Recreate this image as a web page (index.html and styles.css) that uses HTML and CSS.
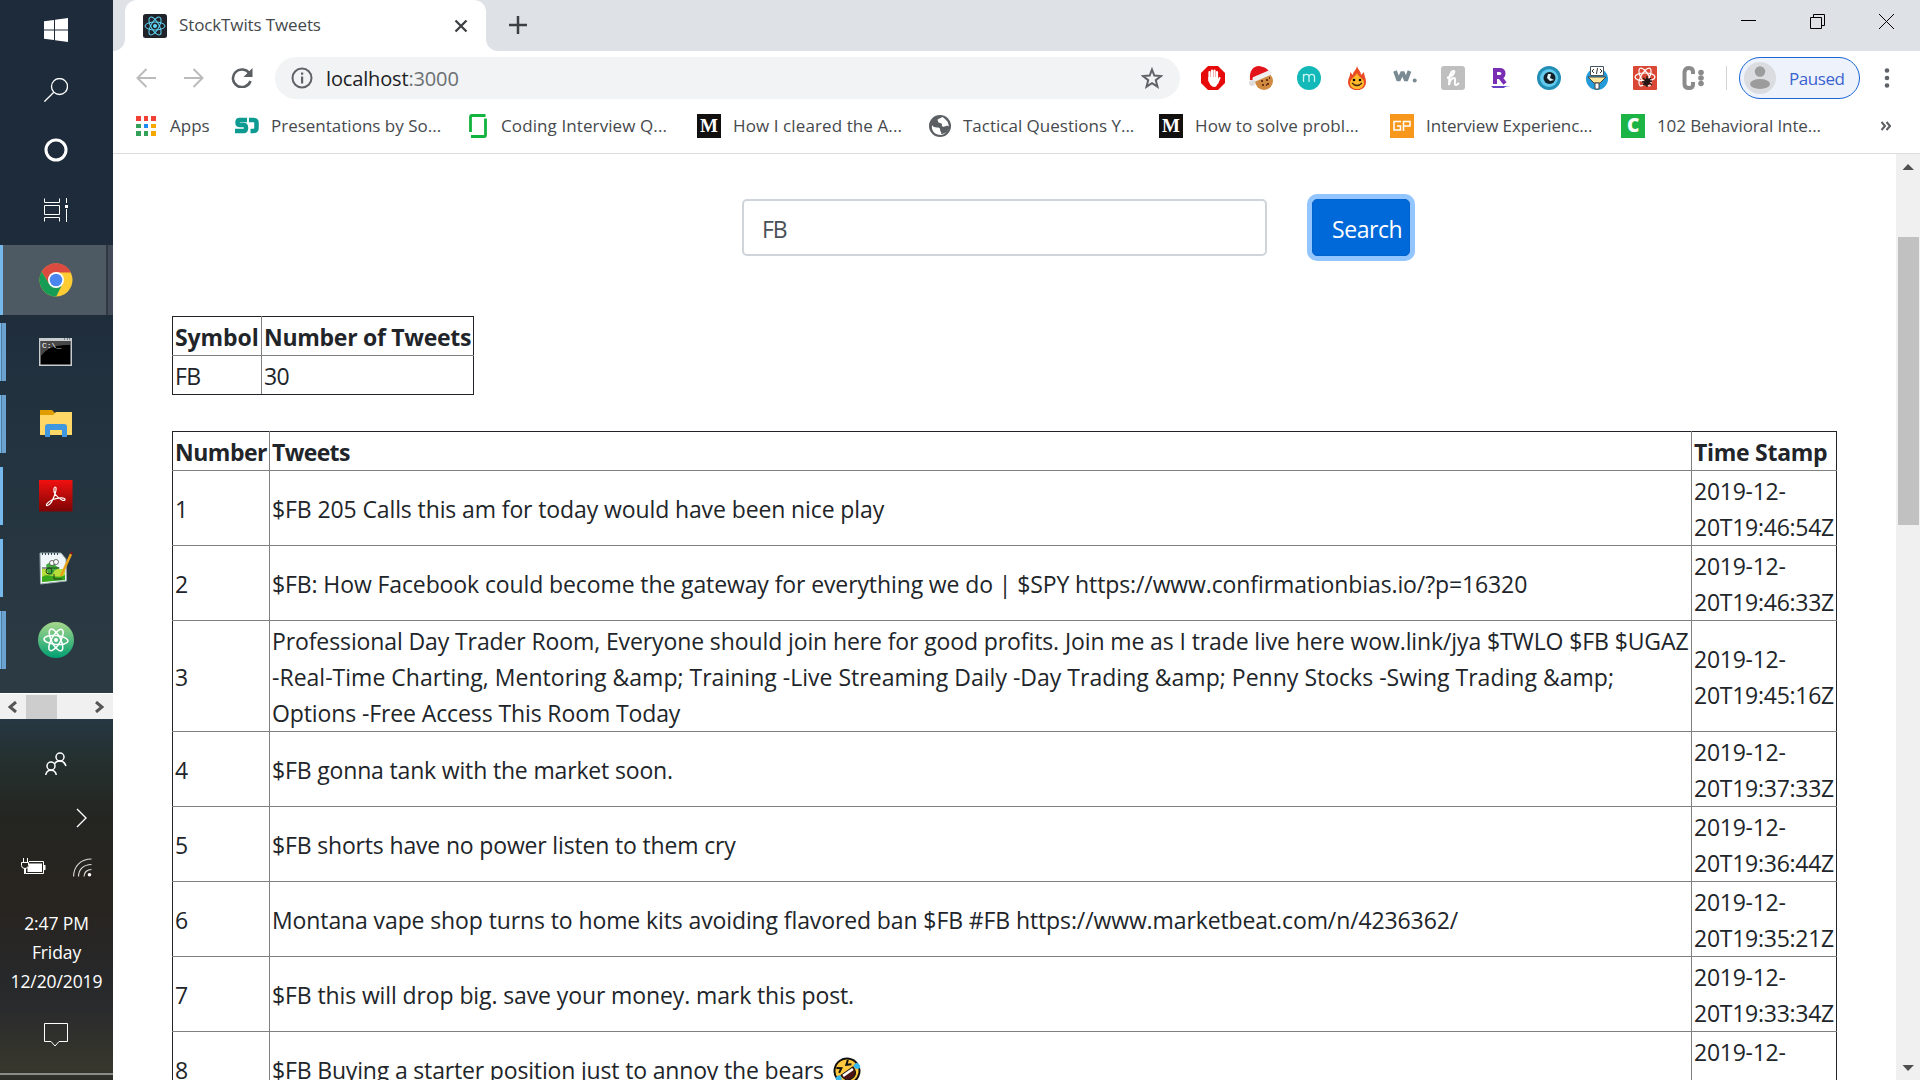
FILE: index.html
```html
<!DOCTYPE html>
<html lang="en">
<head>
<meta charset="utf-8">
<title>StockTwits Tweets</title>
<link rel="stylesheet" href="styles.css">
</head>
<body>
<div class="desktop">
  <aside class="taskbar">
    <div class="task-upper">
      <div class="sys"><svg width="24" height="24" viewBox="0 0 24 24"><path fill="#fff" d="M0 3.300 10 2v9.500H0zM11 1.800 24 0v11.500H11zM0 12.500h10V22L0 20.700zM11 12.500h13V24l-13-1.800z"/></svg></div>
      <div class="sys"><svg width="24" height="24" viewBox="0 0 24 24"><g fill="none" stroke="#fff" stroke-width="1.300"><circle cx="15.500" cy="8.500" r="8"/><path d="M9.800 14.200.4 23.600"/></g></svg></div>
      <div class="sys"><svg width="24" height="24" viewBox="0 0 24 24"><circle cx="12" cy="12" r="10" fill="none" stroke="#fff" stroke-width="3"/></svg></div>
      <div class="sys"><svg width="24" height="24" viewBox="0 0 24 24"><g fill="none" stroke="#fff"><path d="M.5.500v4h15v-4M.5 7.500h15v9H.5zM.5 23.500v-4h15v4M22.500 0v5M22.500 11v13"/></g><path fill="#fff" d="M21 7h3v3h-3z"/></svg></div>
      <div class="app app-current"><svg width="34" height="34" viewBox="0 0 34 34"><circle cx="17" cy="17" r="16.500" fill="#fc3"/><path fill="#db4b3f" d="M2.700 8.700A16.500 16.500 0 0 1 32 9.500H17L9.800 20.500z"/><path fill="#179c55" d="M2.700 8.700A16.500 16.500 0 0 0 17.200 33.500L24 20 17 24.500 10 20.500z"/><circle cx="17" cy="17" r="8" fill="#fff"/><circle cx="17" cy="17" r="6.300" fill="#4a86f0"/></svg></div>
      <div class="app app-multi"><svg width="34" height="28" viewBox="0 0 34 28"><path fill="#c9ccce" d="M0 0h33v28H0z"/><path d="M1.500 3h30v23.500h-30z"/><path fill="#777" d="M2 3h29v4Q10 6 2 18z" opacity=".6"/><path d="M25 1h1m2 0h1m1 0h1" stroke="#345"/><text class="cmd-text" x="3" y="10">C:\_</text></svg></div>
      <div class="app app-multi"><svg width="34" height="28" viewBox="0 0 34 28"><path fill="#e09d00" d="M1 0h12l3 3h17v6H1z"/><path fill="#ffd766" d="M1 5h13l3-3h16v23H1z"/><path fill="#3f97df" d="M6 27V17q0-3 3-3h16q3 0 3 3v10h-5v-7H11v7z"/></svg></div>
      <div class="app"><svg width="34" height="32" viewBox="0 0 34 32"><defs><linearGradient id="pdf" x2="0" y2="1"><stop stop-color="#f11010"/><stop offset="1" stop-color="#7d0404"/></linearGradient></defs><path fill="url(#pdf)" d="M0 0h33.500v31.500H0z"/><path fill="none" stroke="#fff" stroke-width="1.200" d="M16 14c-2-4-1-7 .2-7s1.300 3-.2 7c-2 6-5 11-7.500 11.500S8 22 14 19.500s12-2 12 0-5 1-10-5.500"/></svg></div>
      <div class="app"><svg width="34" height="34" viewBox="0 0 34 34"><path fill="#eef6fa" stroke="#9aa" d="M1 2h21l5 6 .5 22L1.500 33z"/><path d="M3 3h18" stroke="#345" stroke-width="2" stroke-dasharray="1 2"/><path fill="#b6dd38" d="M3 18h23v10L3 31z"/><path fill="#39a81d" d="M3 26c7-5 14 3 23-2v5L3 31z"/><path fill="#42ad3d" d="M7 14c4-4 9-2 10 1l4 2-5 2-3 5-4-1z"/><circle cx="13" cy="12" r="2.500" fill="#fff" stroke="#333" stroke-width=".7"/><circle cx="17" cy="11" r="2.500" fill="#fff" stroke="#333" stroke-width=".7"/><circle cx="10" cy="20" r="3" fill="none" stroke="#253c20"/><path d="M3 17h17M15 23v5h8" fill="none" stroke="#253c20"/><path d="m22 25 10-22" stroke="#e8a317" stroke-width="2.500"/><path d="m32 3 1-2" stroke="#812" stroke-width="2"/></svg></div>
      <div class="app app-multi"><svg width="36" height="36" viewBox="0 0 36 36"><defs><linearGradient id="atom" x2="0" y2="1"><stop stop-color="#a8d78c"/><stop offset="1" stop-color="#00a072"/></linearGradient></defs><circle cx="18" cy="18" r="18" fill="url(#atom)"/><g fill="none" stroke="#fff" stroke-width="1.500"><ellipse cx="18" cy="18" rx="12" ry="4.500" transform="rotate(5 18 18)"/><ellipse cx="18" cy="18" rx="12" ry="4.500" transform="rotate(63 18 18)"/><ellipse cx="18" cy="18" rx="12" ry="4.500" transform="rotate(120 18 18)"/></g><circle cx="18" cy="18" r="2" fill="#fff"/></svg></div>
    </div>
    <div class="hscroll"><svg width="9" height="12" viewBox="0 0 9 12"><path fill="none" stroke="#555" stroke-width="3" d="m8 1-6 5 6 5"/></svg><span class="hthumb"></span><svg width="9" height="12" viewBox="0 0 9 12"><path fill="none" stroke="#555" stroke-width="3" d="m1 1 6 5-6 5"/></svg></div>
    <div class="tray">
      <div class="tray-row people"><svg width="22" height="24" viewBox="0 0 22 24"><g fill="none" stroke="#fff" stroke-width="1.500"><circle cx="15" cy="5" r="4"/><circle cx="6" cy="14" r="4"/><path d="M9.500 12c2-3.500 9-5 11.500 2M.7 23c1-6.500 9.600-6.500 10.600 0"/></g></svg></div>
      <div class="tray-row more"><svg width="11" height="20" viewBox="0 0 11 20"><path fill="none" stroke="#fff" stroke-width="1.400" d="m1 1 9 9-9 9"/></svg></div>
      <div class="tray-row status"><svg width="25" height="18" viewBox="0 0 25 18"><path fill="none" stroke="#fff" d="M8 3.500h14.500v12H4.500V10M2.500 0v4M6.500 0v4M.5 4.500h7v3q0 3-3.500 3T.5 7.500zM3.500 10v6"/><path fill="#fff" d="M8 5.500h13v8.500H6.500v-4L8 8zM23 7h1.500v5H23z"/></svg><svg width="19" height="19" viewBox="0 0 19 19"><g fill="none" stroke="#fff" stroke-width="1.100"><path d="M.6 18.500C.6 8 8 1 18.500 1M5.500 18.500c0-7 5-12 13-12M11 18.500c0-4 3-7 7.500-7" opacity=".85"/></g><circle cx="16.500" cy="16.700" r="1.800" fill="#fff"/></svg></div>
      <div class="clock"><span>2:47 PM</span><span>Friday</span><span>12/20/2019</span></div>
      <div class="tray-row notes"><svg width="24" height="25" viewBox="0 0 24 25"><path fill="none" stroke="#fff" d="M.5.500h23v18H15l-4 4.500-4-4.500H.5z"/></svg></div>
      <div class="show-desktop"></div>
    </div>
  </aside>

  <main class="browser">
    <header class="tabs">
      <span class="strip-end"></span>
      <div class="tab">
        <svg width="24" height="24" viewBox="0 0 24 24"><rect width="24" height="24" rx="2.500" fill="#20232a"/><g fill="none" stroke="#61dafb"><ellipse cx="12" cy="12" rx="10" ry="4"/><ellipse cx="12" cy="12" rx="10" ry="4" transform="rotate(60 12 12)"/><ellipse cx="12" cy="12" rx="10" ry="4" transform="rotate(120 12 12)"/></g><circle cx="12" cy="12" r="2" fill="#61dafb"/></svg>
        <span class="tab-title">StockTwits Tweets</span>
        <svg width="14" height="14" viewBox="0 0 14 14"><path stroke="#3c4043" stroke-width="2.300" d="m1.500 1.500 11 11m0-11-11 11"/></svg>
      </div>
      <div class="tab-rest">
        <svg width="18" height="18" viewBox="0 0 18 18"><path stroke="#3c4043" stroke-width="2.500" d="M0 9h18M9 0v18"/></svg>
        <div class="window-controls">
          <svg width="15" height="15" viewBox="0 0 15 15"><path stroke="#000" d="M0 6.500h15"/></svg>
          <svg width="15" height="15" viewBox="0 0 15 15"><path fill="none" stroke="#000" d="M.5 3.500h11v11H.5zM3.500 3V.5h11v11H12"/></svg>
          <svg width="15" height="15" viewBox="0 0 15 15"><path stroke="#000" d="m0 0 15 15M15 0 0 15"/></svg>
        </div>
      </div>
    </header>

    <div class="toolbar">
      <svg class="nav" width="20" height="20" viewBox="0 0 20 20"><path fill="none" stroke="#bbb" stroke-width="2" d="M20 10H1.500M10.500 1l-9 9 9 9"/></svg>
      <svg class="nav" width="20" height="20" viewBox="0 0 20 20"><path fill="none" stroke="#bbb" stroke-width="2" d="M0 10h18.500M9.500 1l9 9-9 9"/></svg>
      <svg class="reload" width="22" height="20" viewBox="0 0 22 20"><path fill="none" stroke="#5a5d61" stroke-width="2.500" d="M18.500 5.500A9 8.800 0 1 0 19.500 13"/><path fill="#5a5d61" d="M21.500 0v9h-9z"/></svg>
      <div class="omnibox">
        <svg width="22" height="22" viewBox="0 0 22 22"><circle cx="11" cy="11" r="9.500" fill="none" stroke="#5f6368" stroke-width="2"/><path fill="#5f6368" d="M10 5.500h2.200v2.200H10zM10 9.500h2.200v7H10z"/></svg>
        <span class="url">localhost<span class="port">:3000</span></span>
        <svg width="22" height="22" viewBox="0 0 22 22"><path fill="none" stroke="#5f6368" stroke-width="2" d="m11 2.500 2.300 6 6.700.5-5.200 4.200 1.700 6.500-5.500-3.600-5.500 3.600 1.700-6.500L2 9l6.700-.5z"/></svg>
      </div>
      <div class="extensions">
        <svg width="24" height="24" viewBox="0 0 24 24"><path fill="#e60a0a" d="M7 0h10l7 7v10l-7 7H7l-7-7V7z"/><path fill="none" stroke="#fff" stroke-width="2.200" stroke-linecap="round" d="M8.500 6v9M11 4.500V14M13.500 4.500V14M16 6v10"/><path fill="#fff" d="M7.400 11h9.700v5q-1 5-4 5-4 0-5.700-7z"/><path d="m18.500 12-2 5" stroke="#fff" stroke-width="2" stroke-linecap="round"/></svg>
        <svg width="24" height="24" viewBox="0 0 24 24"><circle cx="15" cy="15" r="9" fill="#cf8940"/><path d="M12 15h2m3-1h2m-6 5h2m3-1h2m0-6h1m-4 7h1" stroke="#6b3514" stroke-width="2"/><path fill="#e3131b" d="M1 14C0 5 4 0 10 0c6 1 9 3 10 6L5 14z"/><path d="m6 13 14-6" stroke="#eee" stroke-width="5" stroke-linecap="round"/><circle cx="3" cy="17" r="3" fill="#ddd"/></svg>
        <svg width="24" height="24" viewBox="0 0 24 24"><circle cx="12" cy="12" r="12" fill="#13b9b8"/><path fill="none" stroke="#c8f3ef" stroke-width="1.300" d="M6.500 16V8m0 3c0-3.500 5.500-3.500 5.500 0v5m0-5c0-3.500 5.500-3.500 5.500 0v5"/></svg>
        <svg width="24" height="24" viewBox="0 0 24 24"><path fill="#e94b24" d="M12 0c-1 5-4 5-4 9L5 6c1 4-2 6-2 10 0 11 18 11 18 0 0-4-2-6-2-10l-3 3c0-4-3-5-4-9z"/><path fill="#ffb92a" d="M12 7c2 5 7 5 7 10 0 8-14 8-14 0 0-4 5-6 7-10z"/><circle cx="9" cy="14" r="1.300"/><circle cx="15" cy="14" r="1.300"/><path fill="none" stroke="#421" stroke-width="1.300" d="M7 17q5 5 10 0"/></svg>
        <svg width="24" height="24" viewBox="0 0 24 24"><path fill="none" stroke="#798a93" stroke-width="3.800" stroke-linejoin="bevel" d="M2 5l3.500 9.500L9.500 6l3.500 8.500L16.500 5"/><circle cx="21.700" cy="14.500" r="2" fill="#798a93"/></svg>
        <svg width="24" height="24" viewBox="0 0 24 24"><rect width="24" height="24" rx="3" fill="#bfbfbf"/><path fill="none" stroke="#fff" stroke-width="2" d="M6 12C13 10 15 4 12 5S8 13 8 19c1-5 3-7 5-7 3 0-1 7 2 7 1 0 2-1 3-2"/></svg>
        <svg width="24" height="24" viewBox="0 0 24 24"><path fill="none" stroke="#7a2eb4" stroke-width="4" d="M6 18V4h4.500q4 0 4 3.500T10 11H6m5 0 5 6.500"/><path fill="#6540c2" d="M2 20h20q-6 0-7 2H4z"/></svg>
        <svg width="24" height="24" viewBox="0 0 24 24"><circle cx="12" cy="12" r="12" fill="#238eb5"/><circle cx="12" cy="12" r="9" fill="#62cbed"/><circle cx="12.500" cy="12" r="6" fill="#142028"/><path fill="#e2f4fa" d="M11 8h3l-1 4 4 2-4 1-3-3z"/></svg>
        <svg width="24" height="24" viewBox="0 0 24 24"><circle cx="12" cy="13" r="11" fill="#229bd8"/><path fill="#fff" stroke="#45535c" d="M5.500.500h13v9h-13z"/><path fill="none" stroke="#333" d="m9 3-2 2 2 2m6-4 2 2-2 2m-3.500 1 1-6"/><path fill="#ffe69b" stroke="#444" d="M3 11h18l-6 6H9z"/><path fill="#fff" stroke="#444" d="M10 17h4v6h-4z"/></svg>
        <svg width="24" height="24" viewBox="0 0 24 24"><rect width="24" height="24" rx="1" fill="#da4835"/><g fill="none" stroke="#fff" stroke-width="1.200"><ellipse cx="12" cy="11" rx="10" ry="4"/><ellipse cx="12" cy="11" rx="10" ry="4" transform="rotate(60 12 11)"/><ellipse cx="12" cy="11" rx="10" ry="4" transform="rotate(120 12 11)"/></g><path stroke="#251614" stroke-width="1.300" d="m10 12 9 7m-9 0 8-7m-9 4 10-1m-5-5v11"/><ellipse cx="14" cy="16" rx="3" ry="4" fill="#251614" transform="rotate(30 14 16)"/></svg>
        <svg width="24" height="24" viewBox="0 0 24 24"><path fill="none" stroke="#8b8b8b" stroke-width="4" d="M12 8V6q0-4-4-4T3.500 6v12q0 4 4.500 4t4-4v-2"/><g fill="#8b8b8b"><circle cx="20" cy="6.500" r="2.800"/><circle cx="20" cy="12" r="2.800"/><circle cx="20" cy="17.500" r="2.800"/></g></svg>
      </div>
      <span class="separator"></span>
      <div class="profile"><svg width="32" height="32" viewBox="0 0 32 32"><circle cx="16" cy="16" r="16" fill="#dadce0"/><circle cx="16" cy="9.500" r="5.200" fill="#9c9c9c"/><ellipse cx="16" cy="22" rx="10" ry="5" fill="#9c9c9c"/></svg><span>Paused</span></div>
      <svg width="6" height="20" viewBox="0 0 6 20"><g fill="#5f6368"><circle cx="3" cy="2.500" r="2.300"/><circle cx="3" cy="10" r="2.300"/><circle cx="3" cy="17.500" r="2.300"/></g></svg>
    </div>

    <nav class="bookmarks">
      <a class="bm bm-apps"><svg width="20" height="20" viewBox="0 0 20 20"><path fill="#f23f35" d="M0 0h5v5H0zM8 0h4v5H8zM15 0h5v5h-5z"/><path fill="#34a159" d="M0 8h5v4H0zM0 15h5v5H0zM8 15h4v5H8z"/><path fill="#1e88f2" d="M8 8h4v4H8z"/><path fill="#f6a800" d="M15 8h5v4h-5zM15 15h5v5h-5z"/></svg><span>Apps</span></a>
      <a class="bm bm-deck"><svg width="24" height="24" viewBox="0 0 24 24"><path fill="none" stroke="#0d9a91" stroke-width="4.500" d="M12 6H4.500q-2 0-2 2.500T5 11h3.500q2.500 0 2.500 3t-2.500 3H0M14 6h4.500q3 0 3 3v5q0 3-3 3h-3"/></svg><span>Presentations by So...</span></a>
      <a class="bm bm-glass wide"><svg width="18" height="24" viewBox="0 0 18 24"><path fill="none" stroke="#12b33f" stroke-width="2.800" d="M1.500 18V3q0-1.500 1.500-1.500h13.500M16.500 4.500V21q0 1.500-1.500 1.500H2"/></svg><span>Coding Interview Q...</span></a>
      <a class="bm bm-m1 wide"><span class="medium">M</span><span>How I cleared the A...</span></a>
      <a class="bm bm-globe"><svg width="22" height="22" viewBox="0 0 22 22"><circle cx="11" cy="11" r="11" fill="#5b5f63"/><path fill="#fff" d="M13 2c-2 2-6 2-4 4 0 3 4 1 4 4-1 2 2 2 4 1 3-1 3 1 2 4-2 3-5 4-7 4 1-2-1-2-1-5s-6 0-8-4c-1 6 3 10 9 10 8-1 10-11 5-15-2-2-3-3-4-3z"/></svg><span>Tactical Questions Y...</span></a>
      <a class="bm bm-m2 wide"><span class="medium">M</span><span>How to solve probl...</span></a>
      <a class="bm bm-gp narrow"><svg width="24" height="24" viewBox="0 0 24 24"><path fill="#f7981d" d="M0 0h24v24H0z"/><path fill="none" stroke="#fff" stroke-width="1.500" d="M11 7.500H4v8.500h6.500v-4H7M13.500 17V7.500H20V12h-6"/></svg><span>Interview Experienc...</span></a>
      <a class="bm bm-c narrow"><span class="careercup">C</span><span>102 Behavioral Inte...</span></a>
      <svg width="10" height="10" viewBox="0 0 10 10"><path fill="none" stroke="#5a5d61" stroke-width="2" d="m.5 1 3.500 4L.5 9m5-8L9 5 5.500 9"/></svg>
    </nav>

    <section class="viewport">
      <div class="page">
        <form class="search">
          <div class="field">FB</div>
          <div class="button">Search</div>
        </form>
        <table class="summary">
          <tr><th class="c-symbol">Symbol</th><th>Number of Tweets</th></tr>
          <tr><td>FB</td><td>30</td></tr>
        </table>
        <table class="tweets">
          <tr><th class="c-number">Number</th><th class="c-tweet">Tweets</th><th class="c-time">Time Stamp</th></tr>
          <tr><td>1</td><td>$FB 205 Calls this am for today would have been nice play</td><td>2019-12-<br>20T19:46:54Z</td></tr>
          <tr><td>2</td><td>$FB: How Facebook could become the gateway for everything we do | $SPY https://www.confirmationbias.io/?p=16320</td><td>2019-12-<br>20T19:46:33Z</td></tr>
          <tr><td>3</td><td>Professional Day Trader Room, Everyone should join here for good profits. Join me as I trade live here wow.link/jya $TWLO $FB $UGAZ<br><span class="loose">-Real-Time Charting, Mentoring &amp;amp; Training -Live Streaming Daily -Day Trading &amp;amp; Penny Stocks -Swing Trading &amp;amp;</span><br>Options -Free Access This Room Today</td><td>2019-12-<br>20T19:45:16Z</td></tr>
          <tr class="tight"><td>4</td><td>$FB gonna tank with the market soon.</td><td>2019-12-<br>20T19:37:33Z</td></tr>
          <tr class="tight"><td>5</td><td>$FB shorts have no power listen to them cry</td><td>2019-12-<br>20T19:36:44Z</td></tr>
          <tr><td>6</td><td>Montana vape shop turns to home kits avoiding flavored ban $FB #FB https://www.marketbeat.com/n/4236362/</td><td>2019-12-<br>20T19:35:21Z</td></tr>
          <tr><td>7</td><td>$FB this will drop big. save your money. mark this post.</td><td>2019-12-<br>20T19:33:34Z</td></tr>
          <tr class="tight row-last"><td>8</td><td>$FB Buying a starter position just to annoy the bears <svg class="emoji" width="28" height="28" viewBox="0 0 28 28"><g transform="rotate(-35 14 14)"><circle cx="14" cy="14" r="12.500" fill="#ffc83d" stroke="#111" stroke-width="2"/><path fill="#4b1513" stroke="#111" d="M6.500 14h15q0 9-7.500 9t-7.500-9z"/><path fill="#fff" d="M8 14.500h12v2.500H8z"/><path fill="none" stroke="#111" stroke-width="2" d="m7 5.500 4 3-4.500 2.500M21 5.500l-4 3 4.500 2.500"/><path fill="#35b9f1" d="M1 13q4-1 5 1 0 5-4 5-3-1-1-6zM27 13q-4-1-5 1 0 5 4 5 3-1 1-6z"/></g></svg></td><td>2019-12-</td></tr>
        </table>
      </div>
      <div class="vscroll">
        <svg width="24" height="28" viewBox="0 0 24 28"><path fill="#505050" d="M6.500 16 12 10l6 6z"/></svg>
        <span class="vthumb"></span>
        <svg class="down" width="24" height="24" viewBox="0 0 24 24"><path fill="#505050" d="M6.500 9h11.500L12 15z"/></svg>
      </div>
    </section>
  </main>
</div>
</body>
</html>
```
FILE: styles.css
```css
* { box-sizing: border-box; }
body { margin: 0; overflow: hidden; font-family: "Open Sans", "Noto Sans", sans-serif; color: #212529; }
svg { display: block; flex: none; }
.desktop { display: flex; width: 1920px; height: 1080px; overflow: hidden; }

/* Windows taskbar */
.taskbar { width: 113px; flex: none; display: flex; flex-direction: column; background: #1d2a38; }
.task-upper { height: 693px; background: linear-gradient(#1d2b3a 0, #1e2b3a 35%, #22323f 60%, #2c3b43 100%); }
.sys { height: 60px; display: flex; align-items: center; justify-content: center; padding-right: 1px; }
.app { height: 58px; margin-bottom: 14px; display: flex; align-items: center; justify-content: center; border-left: 3px solid #76b9ed; padding-right: 4px; }
.app-current { height: 70px; margin: 5px 0 8px; background: linear-gradient(90deg, #4d5963 103px, #303841 103px 105px, #424b57 105px); }
.cmd-text { font: 8px "Liberation Mono", monospace; fill: #fff; }
.app-multi { border-left: 0; padding: 0 4px 0 3px; background: linear-gradient(90deg, #76b9ed 1px, #527c9d 1px 2px, #6ba2cf 2px 6px, transparent 6px); }
.hscroll { height: 26px; background: #f0f0f0; display: flex; align-items: center; padding: 0 9px 0 8px; border-top: 1px solid #fff; }
.hthumb { width: 31px; height: 24px; background: #cdcdcd; margin: 0 38px 0 9px; }
.tray { flex: 1; background: linear-gradient(#263843 0, #25302f 40px, #242521 100px, #28241f 180px, #27282a 260px, #2a2b2c 290px, #37372d 350px, #2c2c28 100%); color: #fff; }
.tray-row { display: flex; justify-content: center; align-items: center; }
.people { height: 89px; padding-right: 1px; }
.more { height: 20px; padding-left: 50px; }
.status { height: 78px; gap: 27px; padding-right: 1px; }
.clock { height: 87px; display: flex; flex-direction: column; align-items: center; font-size: 17.500px; letter-spacing: -.1px; line-height: 29px; margin-top: 3px; }
.notes { height: 79px; padding-right: 1px; }
.show-desktop { height: 2px; background: #8b8b87; margin-top: -2px; }

/* Browser chrome */
.browser { flex: 1; min-width: 0; display: flex; flex-direction: column; background: #fff; }
.tabs { height: 51px; display: flex; background: #fff; }
.strip-end { width: 12px; background: #dee1e6; border-bottom-right-radius: 12px; }
.tab { width: 361px; padding: 0 18px; display: flex; align-items: center; background: linear-gradient(#dee1e6, #dee1e6) 0 0 / 100% 14px no-repeat; position: relative; z-index: 0; }
.tab::before { content: ""; position: absolute; inset: 0; background: #fff; border-radius: 12px 12px 0 0; z-index: -1; }
.tab-title { flex: 1; margin-left: 12px; padding-bottom: 2px; font-size: 17px; letter-spacing: -.12px; color: #45494d; }
.tab-rest { flex: 1; display: flex; justify-content: space-between; padding: 16px 26px 0 23px; background: #dee1e6; border-bottom-left-radius: 12px; }
.window-controls { display: flex; gap: 54px; margin-top: -2px; }
.toolbar { height: 54px; display: flex; align-items: center; padding-left: 23px; }
.nav { margin-right: 28px; }
.nav + .nav { margin-right: 27px; }
.reload { margin-right: 22px; }
.omnibox { width: 905px; height: 42px; border-radius: 21px; background: #f1f3f4; display: flex; align-items: center; padding: 0 17px 0 16px; }
.url { flex: 1; margin-left: 13px; font-size: 20px; letter-spacing: -.15px; color: #202124; }
.port { color: #6b6f73; }
.extensions { display: flex; gap: 24px; margin-left: 21px; }
.separator { width: 1px; height: 24px; background: #d0d2d5; margin: 0 12px 0 21px; }
.profile { width: 121px; height: 42px; border: 1.500px solid #1a66d6; border-radius: 21px; background: #edf2fb; color: #3b63d0; font-size: 17px; letter-spacing: -.45px; display: flex; align-items: center; gap: 13px; padding-left: 4px; margin-right: 24px; }
.bookmarks { height: 49px; border-bottom: 1px solid #dadce0; display: flex; align-items: center; padding: 0 29px 6px 23px; font-size: 17px; color: #45494d; }
.bm { display: flex; align-items: center; gap: 12px; flex: none; }
.bm > span:last-child { margin-top: -2px; }
.wide { letter-spacing: .1px; }
.narrow { letter-spacing: -.11px; }
.bm-apps { width: 99px; gap: 14px; }
.bm-deck { width: 234px; }
.bm-glass { width: 228px; gap: 14px; }
.bm-m1 { width: 232px; }
.bm-globe { width: 230px; }
.bm-m2, .bm-gp { width: 231px; }
.bm-c { flex: 1; }
.medium, .careercup { width: 24px; height: 24px; flex: none; background: #12100e; color: #fff; text-align: center; font: bold 19px/24px "Liberation Serif", serif; }
.careercup { background: #1db446; font: 800 19px/23px "Open Sans", sans-serif; }

/* Page content */
.viewport { height: 926px; display: flex; overflow: hidden; }
.page { flex: 1; padding: 45px 59px 0; font-size: 23px; line-height: 36px; letter-spacing: -.11px; }
.search { display: flex; gap: 45px; margin: 0 0 60px 570px; }
.field { width: 525px; height: 57px; border: 2px solid #ced4da; border-radius: 5px; color: #495057; padding: 10px 18px; letter-spacing: -1px; }
.button { width: 98px; height: 57px; border-radius: 5px; background: #0069d9; border: 1px solid #0062cc; box-shadow: 0 0 0 5px #93c5ff; color: #fff; padding: 11px 0 0 19px; letter-spacing: -.45px; }
table { border-collapse: collapse; border: 1px solid #212529; table-layout: fixed; }
th, td { border: 1px solid #808080; padding: 2px 2px 0; height: 39px; text-align: left; white-space: nowrap; }
tr:first-child > * { border-top-color: #212529; }
tr:last-child > * { border-bottom-color: #212529; }
tr > :first-child { border-left-color: #212529; }
tr > :last-child { border-right-color: #212529; }
th { letter-spacing: -.28px; }
.summary { width: 302px; margin-bottom: 36px; }
.summary td { letter-spacing: -.6px; }
.c-symbol { width: 89px; letter-spacing: -.1px; }
.tweets { width: 1665px; }
.tweets td:last-child { letter-spacing: -.26px; }
.c-number { width: 97px; letter-spacing: -.5px; }
.c-tweet { letter-spacing: -.65px; }
.c-time { width: 145px; }
.loose { letter-spacing: .017px; }
.tight { letter-spacing: -.165px; }
.row-last td { height: 75px; }
.row-last td:last-child { vertical-align: top; }
.emoji { display: inline-block; vertical-align: -6px; margin-left: 3px; }
.vscroll { width: 24px; background: #f0f0f0; display: flex; flex-direction: column; align-items: center; }
.vthumb { width: 21px; height: 288px; margin-top: 55px; background: #c1c1c1; }
.down { margin-top: auto; }
```
